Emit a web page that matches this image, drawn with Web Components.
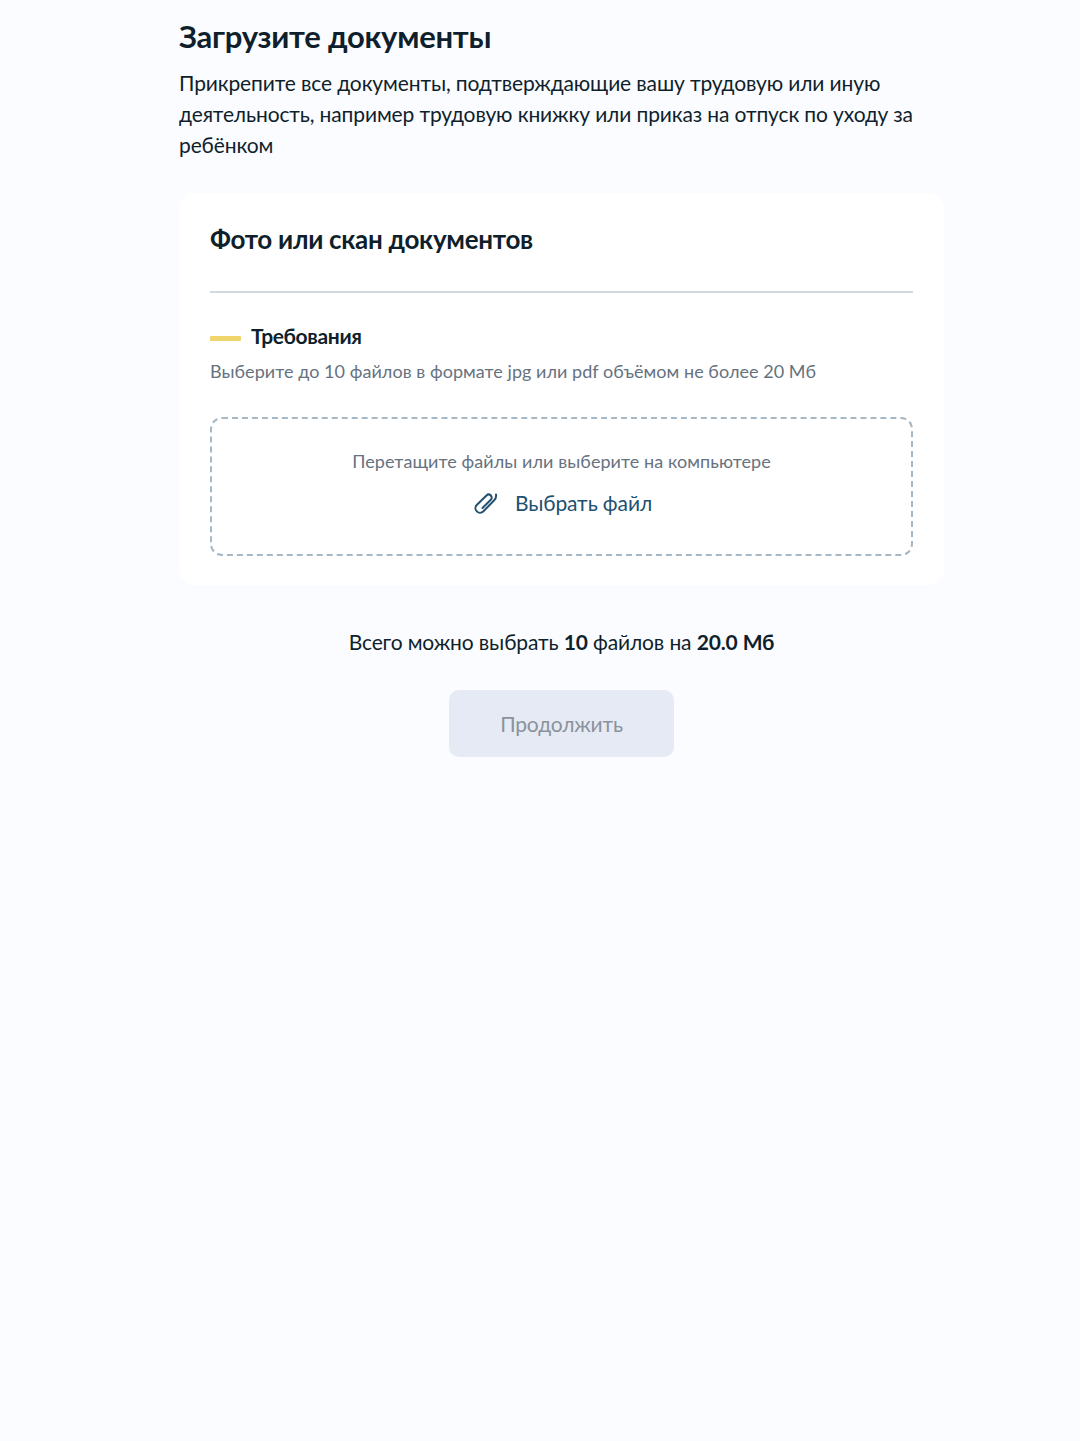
<!DOCTYPE html>
<html lang="ru">
<head>
<meta charset="utf-8">
<title>Загрузите документы</title>
<style>
  html, body { margin: 0; background: #fbfcff; }
  body { font-family: Lato, "Noto Sans", sans-serif; color: #0f1f2b; min-height: 1441px; }
</style>
</head>
<body>
<upload-page>
  <span slot="title">Загрузите документы</span>
  <span slot="lead">Прикрепите все документы, подтверждающие вашу трудовую или иную деятельность, например трудовую книжку или приказ на отпуск по уходу за ребёнком</span>
  <upload-card>
    <span slot="title">Фото или скан документов</span>
    <span slot="req">Требования</span>
    <span slot="hint">Выберите до 10 файлов в формате jpg или pdf объёмом не более 20 Мб</span>
    <drop-zone>
      <span slot="text">Перетащите файлы или выберите на компьютере</span>
      <span slot="action">Выбрать файл</span>
    </drop-zone>
  </upload-card>
  <upload-summary>Всего можно выбрать <b>10</b> файлов на <b>20.0 Мб</b></upload-summary>
  <disabled-button>Продолжить</disabled-button>
</upload-page>

<script>
(function (window) {
  'use strict';

  function shadow(el, html) {
    el.attachShadow({ mode: 'open' });
    el.shadowRoot.innerHTML = html;
  }

  class UploadPage extends HTMLElement {
    constructor() {
      super();
      shadow(this, `
      <style>
        :host { display: block; width: 765px; margin-left: 179px; }
        h1 { margin: 0; padding-top: 15px; font-size: 31px; line-height: 42px; font-weight: 700; letter-spacing: -0.26px; color: #0f1f2b; }
        p { margin: 10px 0 33px; font-size: 21px; line-height: 31px; letter-spacing: -0.13px; color: #0f1f2b; max-width: 740px; }
      </style>
      <h1><slot name="title"></slot></h1>
      <p><slot name="lead"></slot></p>
      <slot></slot>
      `);
    }
  }

  class UploadCard extends HTMLElement {
    constructor() {
      super();
      shadow(this, `
      <style>
        :host { display: block; box-sizing: border-box; height: 392px; padding: 30px 31px; background: #fff; border-radius: 16px; }
        h2 { margin: 0; font-size: 26px; line-height: 33px; font-weight: 700; letter-spacing: -0.3px; color: #0f1f2b; }
        hr { margin: 35px 0 0; border: 0; height: 2px; background: #d3d9dc; }
        .req { position: relative; display: flex; align-items: center; gap: 10px; margin-top: 29px; font-size: 21px; line-height: 28px; font-weight: 700; letter-spacing: -0.35px; color: #0f1f2b; }
        .dash { width: 31px; height: 5px; margin-top: 4px; border-radius: 1px; background: #efd56c; }
        .hint { margin: 9px 0 34px; font-size: 18px; line-height: 24px; letter-spacing: 0.045px; color: #66727f; }
      </style>
      <h2><slot name="title"></slot></h2>
      <hr>
      <div class="req"><span class="dash"></span><slot name="req"></slot></div>
      <div class="hint"><slot name="hint"></slot></div>
      <slot></slot>
      `);
    }
  }

  class DropZone extends HTMLElement {
    constructor() {
      super();
      shadow(this, `
      <style>
        :host { display: flex; flex-direction: column; align-items: center; box-sizing: border-box; height: 139px; padding-top: 30px; border: 2px dashed #a6b8c5; border-radius: 12px; }
        .text { font-size: 18px; line-height: 24px; letter-spacing: 0.07px; color: #66727f; }
        .action { display: flex; align-items: center; gap: 16px; margin-top: 14px; font-size: 21px; line-height: 30px; letter-spacing: -0.1px; color: #22506f; }
        svg { width: 28px; height: 28px; margin-top: 3px; }
      </style>
      <div class="text"><slot name="text"></slot></div>
      <div class="action">
        <svg viewBox="0 0 28 28" fill="none" stroke="#22506f" stroke-width="2" stroke-linecap="round" stroke-linejoin="round">
          <path d="M25 4.5C25.5 7 24.5 9 23 10.5L12.2 21.5a4.6 4.6 0 0 1-6.5-6.5L15.5 5.5a3 3 0 0 1 4.3 4.3L11.5 18"/>
        </svg>
        <slot name="action"></slot>
      </div>
      `);
    }
  }

  class UploadSummary extends HTMLElement {
    constructor() {
      super();
      shadow(this, `
      <style>
        :host { display: block; margin-top: 42px; text-align: center; font-size: 21px; line-height: 30px; letter-spacing: -0.13px; color: #0f1f2b; }
      </style>
      <slot></slot>
      `);
    }
  }

  class DisabledButton extends HTMLElement {
    constructor() {
      super();
      shadow(this, `
      <style>
        :host { display: flex; align-items: center; justify-content: center; box-sizing: border-box; width: 225px; height: 67px; margin: 33px auto 0; border-radius: 10px; background: #e6eaf4; color: #8a939d; font-size: 21px; letter-spacing: -0.2px; }
      </style>
      <slot></slot>
      `);
    }
  }

  window.customElements.define('upload-page', UploadPage);
  window.customElements.define('upload-card', UploadCard);
  window.customElements.define('drop-zone', DropZone);
  window.customElements.define('upload-summary', UploadSummary);
  window.customElements.define('disabled-button', DisabledButton);
})(window);
</script>
</body>
</html>
